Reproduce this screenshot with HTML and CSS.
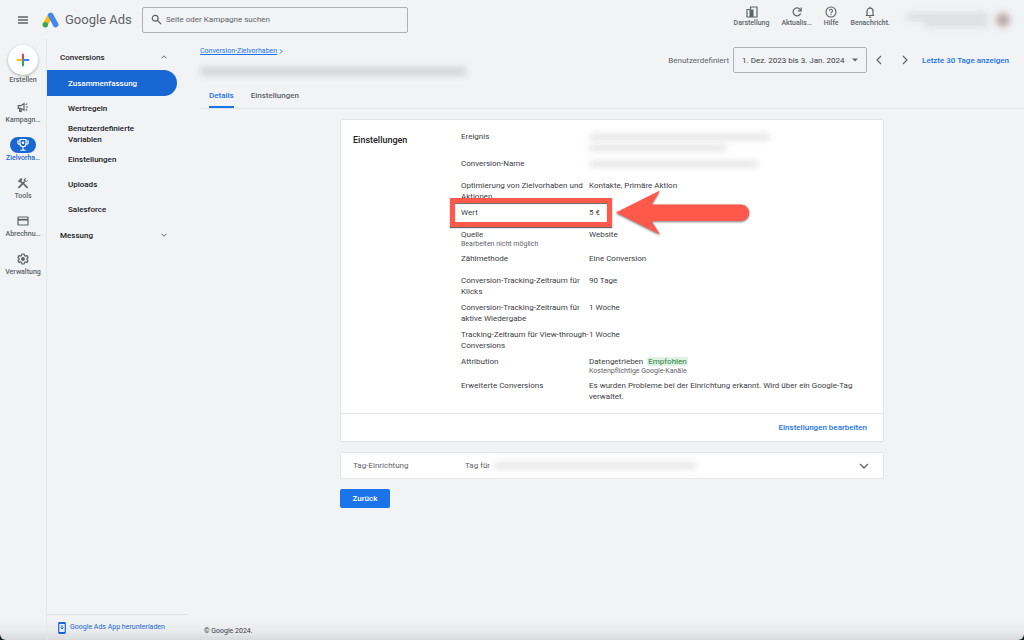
FILE: index.html
```html
<!DOCTYPE html>
<html lang="de">
<head>
<meta charset="utf-8">
<title>Conversions – Google Ads</title>
<link rel="stylesheet" href="styles.css">
</head>
<body>
<div class="app">
  <header class="topbar">
    <button class="icon-btn menu" aria-label="Menü">
      <svg width="12" height="10" viewBox="0 0 12 10" stroke="#5f6368" stroke-width="1.3"><path d="M1 2h10M1 5h10M1 8h10"/></svg>
    </button>
    <a class="brand" href="#">
      <svg width="17" height="16" viewBox="0 0 17 16"><path d="M3.4 12.6 8 3.600" stroke="#fbbc04" stroke-width="5" stroke-linecap="round"/><path d="M8.600 3.300 13.700 12.600" stroke="#4285f4" stroke-width="5.400" stroke-linecap="round"/><circle cx="3.300" cy="12.700" r="2.700" fill="#34a853"/></svg>
      <span>Google Ads</span>
    </a>
    <label class="search">
      <svg width="11" height="11" viewBox="0 0 11 11" fill="none" stroke="#5f6368" stroke-width="1.2"><circle cx="4.2" cy="4.2" r="2.9"/><path d="m6.4 6.4 3.6 3.6"/></svg>
      <input type="search" placeholder="Seite oder Kampagne suchen" aria-label="Seite oder Kampagne suchen">
    </label>
    <nav class="tools" aria-label="Werkzeuge">
      <button class="tool">
        <svg width="12" height="12" viewBox="0 0 12 12"><path d="M4.500 3.500V1H11v10H7M4 3.500H1V11h3" fill="none" stroke="#5f6368" stroke-width="1.200"/><path d="M3.5 3.5H7.5V11.500H3.500z" fill="#5f6368"/></svg>
        <span>Darstellung</span>
      </button>
      <button class="tool">
        <svg width="12" height="12" viewBox="0 0 12 12" fill="none" stroke="#5f6368" stroke-width="1.200"><path d="M9.600 7.300A3.900 3.900 0 1 1 9 3.400L10.200 4.600M10.200 1.500V4.800H6.900"/></svg>
        <span>Aktualis…</span>
      </button>
      <button class="tool">
        <svg width="12" height="12" viewBox="0 0 12 12" fill="none" stroke="#5f6368" stroke-width="1.100"><circle cx="6" cy="6" r="5"/><path d="M4.500 4.800a1.500 1.500 0 1 1 2.400 1.200C6.300 6.400 6 6.600 6 7.300M6 8v1"/></svg>
        <span>Hilfe</span>
      </button>
      <button class="tool">
        <svg width="12" height="12" viewBox="0 0 12 12" fill="none" stroke="#5f6368" stroke-width="1.200"><path d="M1.800 9.500h8.400M3 9.500V5.200a3 3 0 0 1 6 0v4.300M6 2.200V.8"/><path d="M4.900 11.200h2.200" stroke-width="1.300"/></svg>
        <span>Benachricht.</span>
      </button>
    </nav>
    <div class="account" aria-label="Konto">
      <span class="account-lines"><i class="smudge"></i><i class="smudge short"></i></span>
      <i class="avatar"></i>
    </div>
  </header>

  <div class="body">
    <nav class="rail" aria-label="Hauptnavigation">
      <button class="create">
        <span class="create-circle"><svg width="14" height="14" viewBox="0 0 14 14" stroke-width="2"><path d="M7 .8V7" stroke="#ea4335"/><path d="M7 7v6.200" stroke="#34a853"/><path d="M.8 7h5.200" stroke="#fbbc04"/><path d="M6 7h7.200" stroke="#4285f4"/></svg></span>
        <span>Erstellen</span>
      </button>
      <a class="rail-item" href="#">
        <span class="pill"><svg width="12" height="12" viewBox="0 0 12 12" fill="none" stroke="#5f6368" stroke-width="1.200"><path d="M1.200 4.700h2.600L7 2.600v6.600L3.800 7.300H1.200zM2.600 7.300v3h1.600V7.500M8.700 3.800l1.500-1.200M9 6h2M8.700 8.200l1.500 1.200"/></svg></span>
        <span>Kampagn…</span>
      </a>
      <a class="rail-item active" href="#" aria-current="page">
        <span class="pill"><svg width="14" height="14" viewBox="0 0 14 14" fill="none" stroke="#fff" stroke-width="1.100"><path d="M4 1.500h6v4.300a3 3 0 0 1-6 0zM4 3H1.800v1.200A2.200 2.200 0 0 0 4 6.400M10 3h2.200v1.200A2.200 2.200 0 0 1 10 6.400M7 8.800v3M4.300 12.200h5.400"/><circle cx="7" cy="4.800" r=".8" fill="#fff"/></svg></span>
        <span>Zielvorha…</span>
      </a>
      <a class="rail-item" href="#">
        <span class="pill"><svg width="12" height="12" viewBox="0 0 12 12" fill="none" stroke="#5f6368"><path d="M10.600 10.800 5.300 5.500M1.400 10.800l6.200-6.200" stroke-width="1.700"/><path d="M1 4 4 1l1.600 1.300L4.300 3.900l1.500 1.500-1.200 1.200-1.700-1.700-.9.500z" fill="#5f6368" stroke="none"/><path d="M9.200.9A2.300 2.300 0 0 0 6.800 3.600 2.400 2.400 0 0 0 11.200 2.700L9.600 4.100 8 3z" fill="#5f6368" stroke="none"/></svg></span>
        <span>Tools</span>
      </a>
      <a class="rail-item" href="#">
        <span class="pill"><svg width="12" height="12" viewBox="0 0 12 12" fill="none" stroke="#5f6368" stroke-width="1.200"><rect x="1" y="2" width="10" height="8" rx=".6"/><path d="M1 4.700h10" stroke-width="1.800"/></svg></span>
        <span>Abrechnu…</span>
      </a>
      <a class="rail-item" href="#">
        <span class="pill"><svg width="12" height="12" viewBox="0 0 12 12" fill="none" stroke="#5f6368" stroke-width="1.200"><path d="M4.900 1h2.200l.4 1.500 1 .6L10 2.600l1 1.900-1.100 1v1l1.100 1-1 1.900-1.500-.5-1 .6L7.100 11H4.900l-.4-1.500-1-.6-1.500.5-1-1.900 1.100-1v-1L1 4.500l1-1.900 1.500.5 1-.6z"/><circle cx="6" cy="6" r="1.300" fill="#5f6368"/></svg></span>
        <span>Verwaltung</span>
      </a>
    </nav>

    <aside class="sidebar">
      <nav aria-label="Conversions">
        <button class="group" aria-expanded="true">Conversions
          <svg width="6" height="6" viewBox="0 0 6 6" fill="none" stroke="#5f6368"><path d="M.5 4.300 3 1.800l2.500 2.500"/></svg>
        </button>
        <ul class="sub">
          <li><a class="selected" href="#" aria-current="page">Zusammenfassung</a></li>
          <li><a href="#">Wertregeln</a></li>
          <li><a href="#">Benutzerdefinierte Variablen</a></li>
          <li><a href="#">Einstellungen</a></li>
          <li><a href="#">Uploads</a></li>
          <li><a href="#">Salesforce</a></li>
        </ul>
        <button class="group" aria-expanded="false">Messung
          <svg width="6" height="6" viewBox="0 0 6 6" fill="none" stroke="#5f6368"><path d="M.5 1.800 3 4.300l2.500-2.500"/></svg>
        </button>
      </nav>
      <a class="app-link" href="#">
        <svg width="8" height="12" viewBox="0 0 8 12" fill="none" stroke="#1967d2"><rect x=".7" y=".7" width="6.600" height="10.600" rx=".8" stroke-width="1.200"/><path d="M1 1.200h6M1 10.600h6" stroke-width="1.400"/><path d="M4 3.200v3.500M2.600 5.500 4 6.900l1.400-1.400"/></svg>
        Google Ads App herunterladen
      </a>
    </aside>

    <main class="main">
      <div class="page-head">
        <div class="heading">
          <p class="crumb"><a href="#">Conversion-Zielvorhaben</a>
            <svg width="4" height="6" viewBox="0 0 4 6" fill="none" stroke="#1a73e8"><path d="M1 .5l2 2-2 2"/></svg></p>
          <i class="smudge title-smudge"></i>
        </div>
        <div class="range">
          <span>Benutzerdefiniert</span>
          <button class="date">1. Dez. 2023 bis 3. Jan. 2024
            <svg width="6" height="4" viewBox="0 0 6 4"><path d="M0 .5h6L3 3.500z" fill="#5f6368"/></svg></button>
          <button class="icon-btn" aria-label="Zurück"><svg width="6" height="10" viewBox="0 0 6 10" fill="none" stroke="#5f6368" stroke-width="1.200"><path d="M5 1 1 5l4 4"/></svg></button>
          <button class="icon-btn" aria-label="Weiter"><svg width="6" height="10" viewBox="0 0 6 10" fill="none" stroke="#5f6368" stroke-width="1.200"><path d="m1 1 4 4-4 4"/></svg></button>
          <a class="last30" href="#">Letzte 30 Tage anzeigen</a>
        </div>
      </div>
      <nav class="tabs" aria-label="Ansicht">
        <a class="tab current" href="#" aria-current="page">Details</a>
        <a class="tab" href="#">Einstellungen</a>
      </nav>

      <div class="content">
        <section class="card">
          <div class="card-body">
            <h2>Einstellungen</h2>
            <dl class="facts">
              <div class="fact tall"><dt>Ereignis</dt><dd class="hidden-value"><i class="smudge wide"></i><i class="smudge mid"></i></dd></div>
              <div class="fact"><dt>Conversion-Name</dt><dd class="hidden-value"><i class="smudge name"></i></dd></div>
              <div class="fact"><dt>Optimierung von Zielvorhaben und Aktionen</dt><dd>Kontakte, Primäre Aktion</dd></div>
              <div class="fact"><dt>Wert</dt><dd>5 €</dd>
                <span class="frame"></span>
                <svg class="arrow" width="135" height="48" viewBox="0 0 135 48"><path d="M1 23.500 45 1.500 36.500 15.500H126a8.200 8.200 0 0 1 0 16.400H36.500L45 45.500z" fill="#ff594b"/></svg>
              </div>
              <div class="fact"><dt>Quelle<small>Bearbeiten nicht möglich</small></dt><dd>Website</dd></div>
              <div class="fact"><dt>Zählmethode</dt><dd>Eine Conversion</dd></div>
              <div class="fact"><dt>Conversion-Tracking-Zeitraum für Klicks</dt><dd>90 Tage</dd></div>
              <div class="fact"><dt>Conversion-Tracking-Zeitraum für aktive Wiedergabe</dt><dd>1 Woche</dd></div>
              <div class="fact"><dt>Tracking-Zeitraum für View-through-Conversions</dt><dd>1 Woche</dd></div>
              <div class="fact"><dt>Attribution</dt><dd>Datengetrieben <span class="badge">Empfohlen</span><small>Kostenpflichtige Google-Kanäle</small></dd></div>
              <div class="fact"><dt>Erweiterte Conversions</dt><dd>Es wurden Probleme bei der Einrichtung erkannt. Wird über ein Google-Tag verwaltet.</dd></div>
            </dl>
          </div>
          <div class="card-foot"><a href="#">Einstellungen bearbeiten</a></div>
        </section>

        <section class="card tag-row">
          <span class="tag-label">Tag-Einrichtung</span>
          <span class="tag-value">Tag für <i class="smudge tag-smudge"></i></span>
          <button class="icon-btn" aria-label="Aufklappen"><svg width="10" height="6" viewBox="0 0 10 6" fill="none" stroke="#5f6368" stroke-width="1.300"><path d="m1 1 4 4 4-4"/></svg></button>
        </section>

        <button class="back">Zurück</button>
      </div>
      <footer class="legal">© Google 2024.</footer>
    </main>
  </div>
</div>
</body>
</html>
```
FILE: styles.css
```css
* { box-sizing: border-box; }
body {
  margin: 0;
  background: #17211f;
  color: #3c4043;
  font: 8px/11px Roboto, sans-serif;
}
button, input { font: inherit; color: inherit; border: 0; background: none; padding: 0; margin: 0; }
a { color: inherit; text-decoration: none; }
svg { flex: none; display: block; }

.app {
  min-height: 100vh;
  display: flex;
  flex-direction: column;
  background: linear-gradient(to top, #d8dadb 0, #e9ebec 9px, #f1f3f4 22px);
  border-radius: 0 0 6px 6px;
}
.icon-btn { display: flex; align-items: center; justify-content: center; }

.topbar { display: flex; align-items: center; height: 39px; padding-right: 14px; }
.menu { width: 46px; }
.brand {
  display: flex; align-items: center; gap: 6px; width: 96px;
  font-size: 13px; color: #5f6368; white-space: nowrap;
}
.brand svg { margin-left: -4px; }
.search {
  display: flex; align-items: center; gap: 4px;
  width: 266px; height: 26px; padding: 0 8px;
  border: 1px solid #aeb1b4; border-radius: 2px;
}
.search input { flex: 1; min-width: 0; outline: 0; }
.search input::placeholder { color: #5f6368; opacity: 1; }
.tools { display: flex; gap: 12px; align-self: flex-start; padding-top: 6px; margin-left: auto; margin-right: 16px; }
.tool {
  display: flex; flex-direction: column; align-items: center; gap: 1px;
  font-size: 7px; line-height: 9px; font-weight: 500; color: #5f6368;
}
.account { display: flex; align-items: center; gap: 8px; }
.account-lines { display: flex; flex-direction: column; align-items: flex-end; gap: 2px; }
.smudge { display: block; width: 82px; height: 5px; background: #d4d5d6; border-radius: 3px; filter: blur(3px); }
.short { width: 64px; }
.avatar { width: 14px; height: 14px; border-radius: 50%; background: #b9a8ab; filter: blur(3px); }

.body { flex: 1; display: flex; }
.rail {
  width: 47px; flex: none; border-right: 1px solid #e6e8ea;
  display: flex; flex-direction: column; align-items: center;
  padding-top: 6px; font-size: 7px; font-weight: 500; line-height: 8px; color: #5f6368;
}
.create { display: flex; flex-direction: column; align-items: center; gap: 1px; margin-bottom: 15px; }
.create-circle {
  display: flex; align-items: center; justify-content: center;
  width: 30px; height: 30px; border-radius: 50%; background: #fff;
  box-shadow: 0 1px 3px #0000004d;
}
.rail-item { display: flex; flex-direction: column; align-items: center; gap: 1px; height: 38px; }
.pill { display: flex; align-items: center; justify-content: center; width: 26px; height: 16px; border-radius: 8px; }
.active { color: #1967d2; }
.active .pill { background: #1967d2; }

.sidebar { width: 141px; flex: none; display: flex; flex-direction: column; justify-content: space-between; font-weight: 500; }
.group {
  display: flex; align-items: center; justify-content: space-between;
  width: 100%; height: 26px; padding: 0 21px 0 13px; font-weight: 500; color: #202124;
}
.sidebar nav { padding-top: 5px; }
.sub { list-style: none; margin: 0; padding: 0; }
.sub a { display: flex; align-items: center; min-height: 25px; width: 130px; padding: 2px 21px; color: #202124; }
.sub .selected { background: #1967d2; color: #fff; border-radius: 0 13px 13px 0; min-height: 26px; }
.app-link {
  display: flex; align-items: center; gap: 4px; height: 26px; padding-left: 11px;
  border-top: 1px solid #dfe1e3; color: #1967d2; font-size: 7px; font-weight: 400;
}

.main { flex: 1; min-width: 0; padding-left: 12px; display: flex; flex-direction: column; }
.page-head { display: flex; justify-content: space-between; padding: 8px 15px 0 0; height: 45px; }
.heading { display: flex; flex-direction: column; gap: 11px; }
.crumb { display: flex; align-items: center; gap: 2px; margin: 0; font-size: 7px; line-height: 9px; color: #1a73e8; }
.crumb a { text-decoration: underline; }
.title-smudge { width: 266px; height: 9px; background: #d5d6d7; }
.range { display: flex; align-items: center; align-self: flex-start; color: #5f6368; }
.date {
  display: flex; align-items: center; justify-content: space-between;
  width: 134px; height: 26px; padding: 0 8px; margin: 0 9px 0 4px;
  border: 1px solid #b1b4b6; border-radius: 2px; color: #3c4043;
}
.range .icon-btn { margin-right: 20px; }
.range .icon-btn + .icon-btn { margin-right: 14px; }
.last30 { color: #1a73e8; font-weight: 500; }
.tabs { display: flex; gap: 17px; padding-left: 9px; height: 25px; border-bottom: 1px solid #e3e5e7; color: #5f6368; font-weight: 500; }
.tab { padding-top: 6px; height: 24px; }
.current { color: #1a73e8; border-bottom: 2px solid #1a73e8; }

.content { width: 100%; max-width: 544px; margin: 10px auto 0; display: flex; flex-direction: column; align-items: flex-start; gap: 10px; }
.card { width: 100%; background: #fff; border: 1px solid #e3e5e7; border-radius: 2px; }
.card-body { display: grid; grid-template-columns: 108px 1fr; padding: 11px 12px 6px; }
h2 { margin: 4px 0 0; font-size: 9px; line-height: 11px; font-weight: 500; color: #202124; }
.facts { margin: 0; }
.fact { display: grid; grid-template-columns: 128px 1fr; min-height: 22px; padding-bottom: 5px; position: relative; }
.tall { min-height: 27px; }
dd { margin: 0; padding-right: 12px; }
small { display: block; font-size: 7px; line-height: 8px; color: #5f6368; }
.badge { background: #e0f2e4; color: #188038; border-radius: 2px; padding: 0 1px; margin-left: 2px; }
.hidden-value { display: flex; flex-direction: column; gap: 5px; padding-top: 3px; }
.hidden-value .smudge { height: 6px; background: #e2e2e2; }
.hidden-value .wide { width: 182px; }
.hidden-value .mid { width: 138px; }
.hidden-value .name { width: 170px; }
.frame {
  position: absolute; left: -11px; top: -9px; width: 162px; height: 29px;
  border: 5px solid #ff594b; box-shadow: 0 1px 1px #0009, inset 0 1px 1px #0009;
}
.arrow { position: absolute; left: 154px; top: -18px; filter: drop-shadow(0 1px 1px #0008); z-index: 1; }
.card-foot { display: flex; justify-content: flex-end; padding: 8px 16px; border-top: 1px solid #e3e5e7; color: #1a73e8; font-weight: 500; }
.tag-row { display: flex; align-items: center; padding: 7px 14px 7px 12px; color: #5f6368; }
.tag-label { width: 112px; }
.tag-value { display: flex; align-items: center; gap: 4px; flex: 1; }
.tag-smudge { width: 202px; height: 7px; background: #e6e6e6; }
.back { background: #1a73e8; color: #fff; font-weight: 500; border-radius: 2px; width: 50px; height: 19px; }
.legal { margin-top: auto; padding: 0 0 4px 4px; font-size: 7px; line-height: 9px; }
```
